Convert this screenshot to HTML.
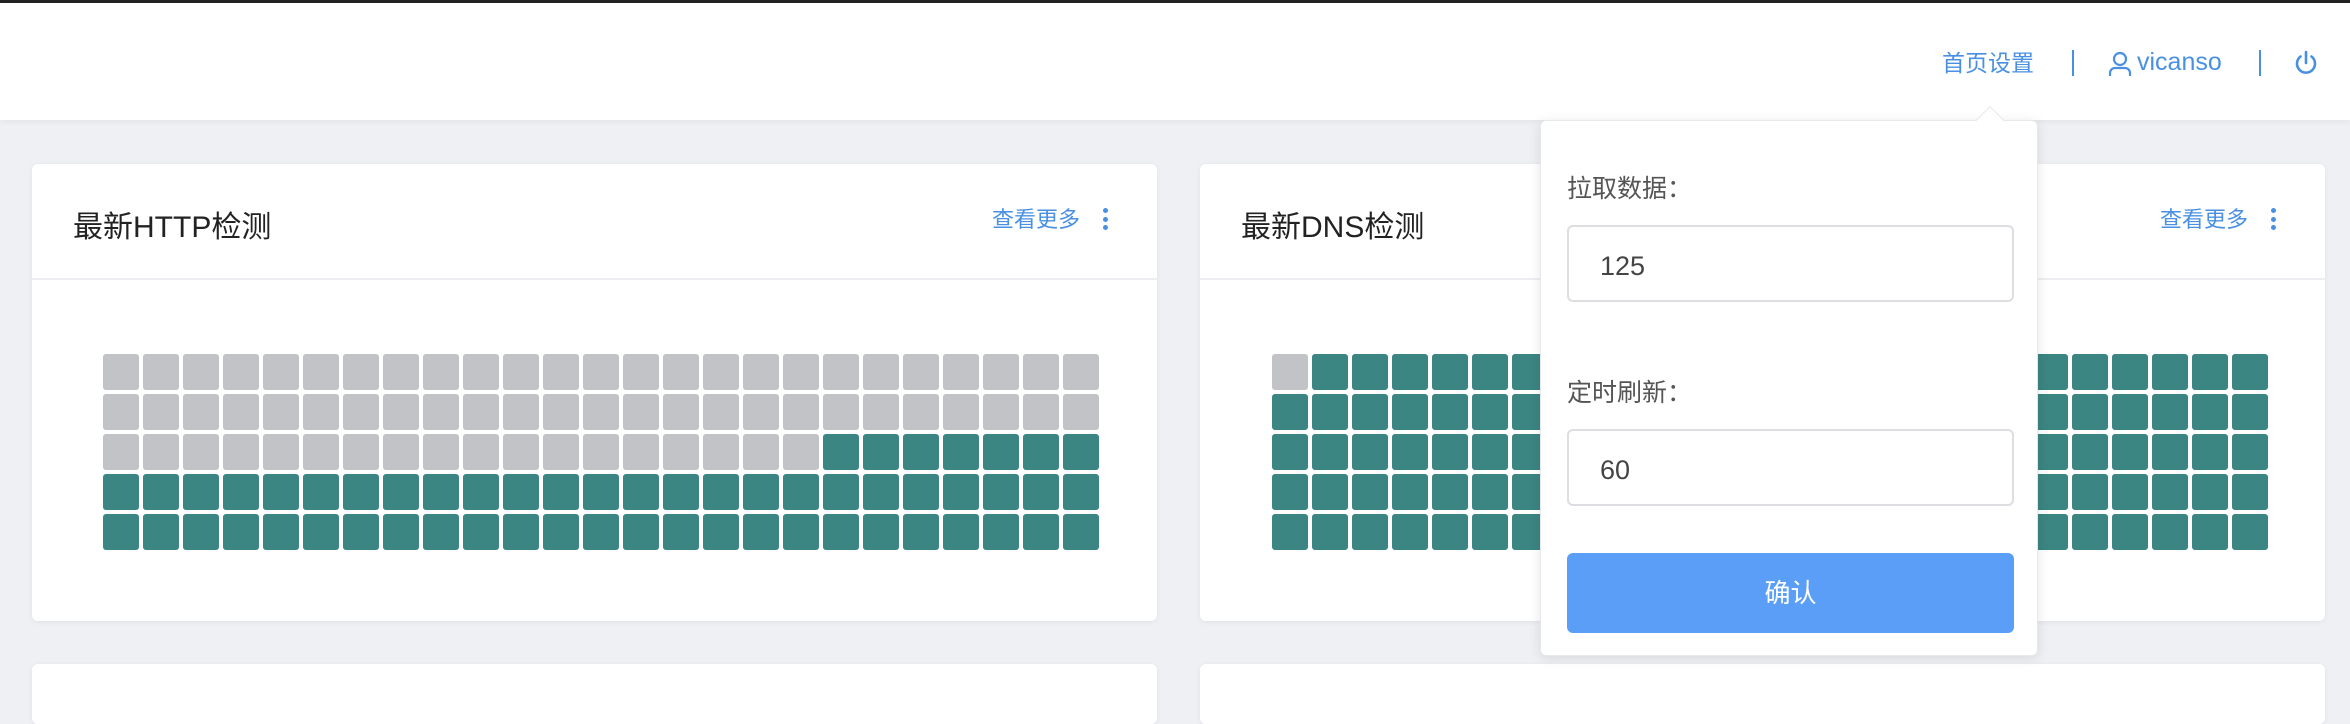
<!DOCTYPE html>
<html><head><meta charset="utf-8"><style>
*{box-sizing:border-box;margin:0;padding:0}
body{width:2350px;height:688px;overflow:hidden;background:#eef0f4;font-family:"Liberation Sans","Noto Sans CJK SC",sans-serif;position:relative}
.top{position:absolute;left:0;top:0;width:2350px;height:120px;background:#fff;border-top:3px solid #222;box-shadow:0 2px 6px rgba(0,0,0,.05)}
.nav{position:absolute;top:46px;font-size:23px;color:#4a90e2;line-height:34px}
.sep{position:absolute;top:46px;width:2px;height:26px;background:#4a90e2;margin-top:4px}
.card{position:absolute;background:#fff;border-radius:6px;box-shadow:0 1px 6px rgba(0,0,0,.06)}
.ch{height:116px;border-bottom:2px solid #eceef2;position:relative}
.title{position:absolute;left:41px;top:38px;font-size:30px;color:#222}
.more{position:absolute;top:38px;font-size:22px;color:#4a90e2}
.dots{position:absolute;top:44px;width:5px}
.dots i{display:block;width:5px;height:5px;border-radius:50%;background:#4a90e2;margin-bottom:3.5px}
.grid{position:absolute;display:grid;grid-template-columns:repeat(25,36px);grid-auto-rows:36px;gap:4px}
.grid b{border-radius:3px;background:#3b8583}
.grid b.g{background:#c2c3c6}
.pop{position:absolute;left:1540px;top:120px;width:498px;height:536px;background:#fff;border-radius:6px;box-shadow:0 2px 12px rgba(0,0,0,.1);border:1px solid #e6e8ec}
.arrow{position:absolute;left:1980px;top:110px;width:20px;height:20px;background:#fff;transform:rotate(45deg);border-left:1px solid #e6e8ec;border-top:1px solid #e6e8ec}
.lbl{position:absolute;left:26px;font-size:25px;color:#555}
.inp{position:absolute;left:26px;width:447px;height:77px;border:2px solid #dcdee2;border-radius:6px;font-size:27px;color:#444;padding:24px 0 0 31px}
.btn{position:absolute;left:26px;top:432px;width:447px;height:80px;background:#5a9ef8;border-radius:6px;color:#fff;font-size:26px;text-align:center;line-height:80px}
</style></head><body>
<div class="top">
<div class="nav" style="left:1942px;top:43px">首页设置</div>
<div class="sep" style="left:2072px;top:43px"></div>
<svg style="position:absolute;left:2108px;top:48px" width="24" height="26" viewBox="0 0 24 26" fill="none" stroke="#4a90e2" stroke-width="2.2"><circle cx="12" cy="8" r="6"/><path d="M2 25v-3a5 5 0 0 1 5-5h10a5 5 0 0 1 5 5v3"/></svg>
<div class="nav" style="left:2137px;top:42px;font-size:25px">vicanso</div>
<div class="sep" style="left:2259px;top:43px"></div>
<svg style="position:absolute;left:2293px;top:46px" width="26" height="28" viewBox="0 0 26 28" fill="none" stroke="#4a90e2" stroke-width="2.6" stroke-linecap="round"><path d="M13 3v11"/><path d="M7.5 7.5a9 9 0 1 0 11 0"/></svg>
</div>

<div class="card" style="left:32px;top:164px;width:1125px;height:457px">
<div class="ch"><div class="title">最新HTTP检测</div><div class="more" style="left:960px">查看更多</div><div class="dots" style="left:1071px"><i></i><i></i><i></i></div></div>
<div class="grid" id="g1" style="left:71px;top:190px"></div>
</div>
<div class="card" style="left:1200px;top:164px;width:1125px;height:457px">
<div class="ch"><div class="title">最新DNS检测</div><div class="more" style="left:960px">查看更多</div><div class="dots" style="left:1071px"><i></i><i></i><i></i></div></div>
<div class="grid" id="g2" style="left:72px;top:190px"></div>
</div>
<div class="card" style="left:32px;top:664px;width:1125px;height:60px"></div>
<div class="card" style="left:1200px;top:664px;width:1125px;height:60px"></div>

<div class="pop">
<div class="lbl" style="top:48px">拉取数据：</div>
<div class="inp" style="top:104px">125</div>
<div class="lbl" style="top:252px">定时刷新：</div>
<div class="inp" style="top:308px">60</div>
<div class="btn">确认</div>
</div>
<div class="arrow"></div>
<script>
var g1=document.getElementById('g1'),g2=document.getElementById('g2'),h1='',h2='';
for(var i=0;i<125;i++){h1+='<b'+(i<68?' class="g"':'')+'></b>';h2+='<b'+(i<1?' class="g"':'')+'></b>';}
g1.innerHTML=h1;g2.innerHTML=h2;
</script>
</body></html>
